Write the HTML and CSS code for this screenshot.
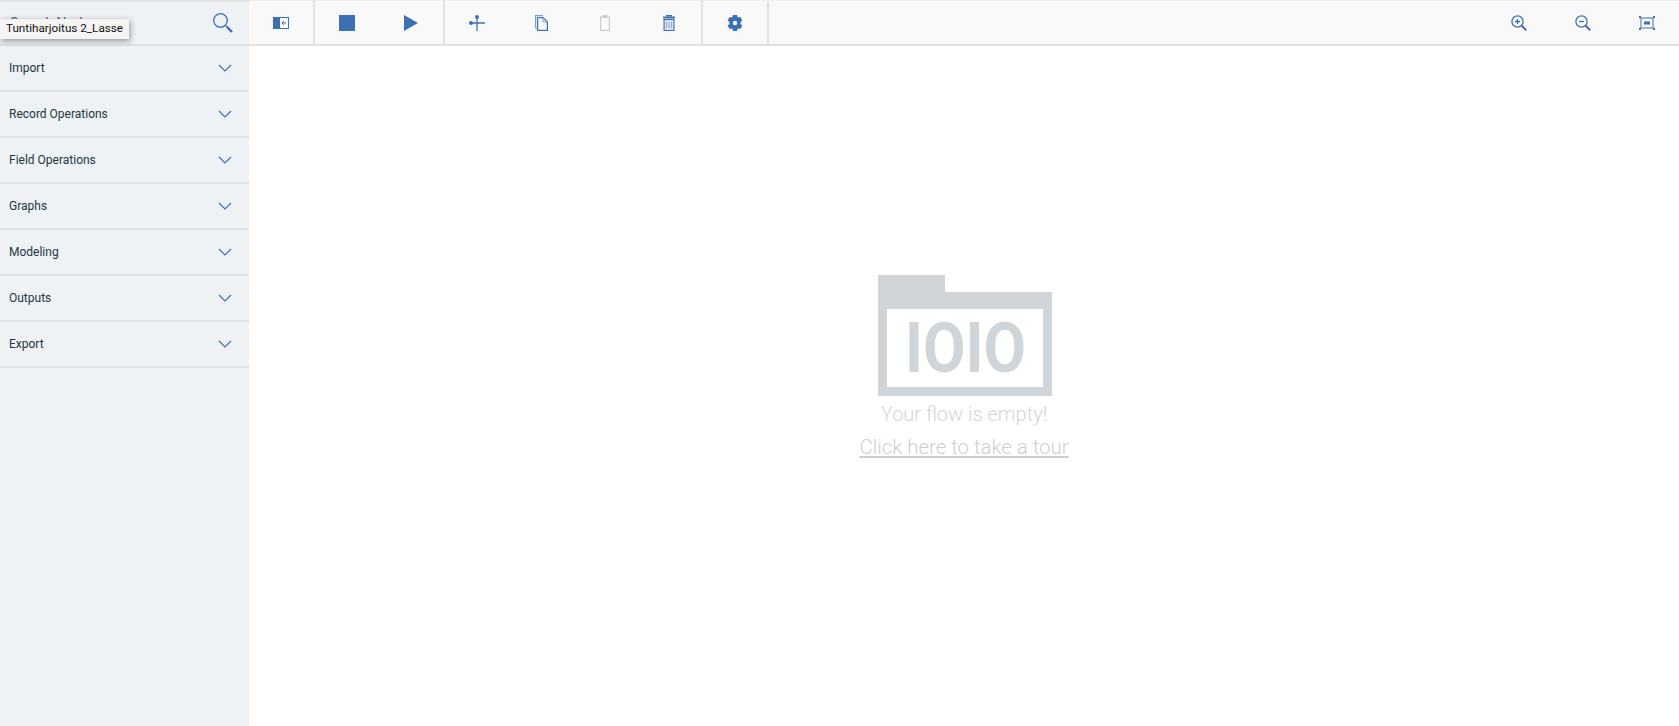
FILE: index.html
```html
<!DOCTYPE html>
<html lang="en">
  <head>
    <meta charset="UTF-8" />
    <title>Flow Editor</title>
    <link rel="stylesheet" href="styles.css">
  </head>

  <body>
    <div class="app">
      <aside class="palette">
        <div class="search-row">
          <span class="search-label">Search Nodes</span>
          <svg class="search-icon" width="20" height="20" viewBox="0 0 20 20">
            <circle cx="7.5" cy="7.5" r="6.8" fill="none" stroke="#3d70b2" stroke-width="1.3" />
            <path d="M12.5 12.5 L14.5 14.5" stroke="#3d70b2" stroke-width="1.2" />
            <path d="M14 14 L19 19" stroke="#3d70b2" stroke-width="2.4" />
          </svg>
          <div class="tooltip">Tuntiharjoitus 2_Lasse</div>
        </div>

        <div class="cat-row">
          <span>Import</span>
          <svg class="chev" width="14" height="8" viewBox="0 0 14 8"><path d="M1 1 L7 7 L13 1" /></svg>
        </div>
        <div class="cat-row">
          <span>Record Operations</span>
          <svg class="chev" width="14" height="8" viewBox="0 0 14 8"><path d="M1 1 L7 7 L13 1" /></svg>
        </div>
        <div class="cat-row">
          <span>Field Operations</span>
          <svg class="chev" width="14" height="8" viewBox="0 0 14 8"><path d="M1 1 L7 7 L13 1" /></svg>
        </div>
        <div class="cat-row">
          <span>Graphs</span>
          <svg class="chev" width="14" height="8" viewBox="0 0 14 8"><path d="M1 1 L7 7 L13 1" /></svg>
        </div>
        <div class="cat-row">
          <span>Modeling</span>
          <svg class="chev" width="14" height="8" viewBox="0 0 14 8"><path d="M1 1 L7 7 L13 1" /></svg>
        </div>
        <div class="cat-row">
          <span>Outputs</span>
          <svg class="chev" width="14" height="8" viewBox="0 0 14 8"><path d="M1 1 L7 7 L13 1" /></svg>
        </div>
        <div class="cat-row">
          <span>Export</span>
          <svg class="chev" width="14" height="8" viewBox="0 0 14 8"><path d="M1 1 L7 7 L13 1" /></svg>
        </div>
      </aside>

      <main class="main">
        <div class="toolbar">
          <div class="tool-group">
            <div class="tool">
              <svg width="16" height="12" viewBox="0 0 16 12">
                <rect x="0.5" y="0.5" width="15" height="11" fill="#fff" stroke="#3d70b2" />
                <rect x="0" y="0" width="7" height="12" fill="#3d70b2" />
                <path d="M9 6 L13 6 M11 4 L9 6 L11 8" fill="none" stroke="#3d70b2" />
              </svg>
            </div>
          </div>
          <div class="tool-group">
            <div class="tool">
              <svg width="16" height="16" viewBox="0 0 16 16"><rect width="16" height="16" fill="#3d70b2" /></svg>
            </div>
            <div class="tool">
              <svg width="14" height="16" viewBox="0 0 14 16"><path d="M0 0 L14 8 L0 16 Z" fill="#3d70b2" /></svg>
            </div>
          </div>
          <div class="tool-group">
            <div class="tool">
              <svg width="16" height="16" viewBox="0 0 16 16">
                <path d="M8 2 L8 16 M2 8 L16 8" fill="none" stroke="#3d70b2" stroke-width="1.3" />
                <circle cx="8" cy="2" r="2" fill="#3d70b2" />
                <circle cx="2" cy="8" r="2" fill="#3d70b2" />
              </svg>
            </div>
            <div class="tool">
              <svg width="13" height="16" viewBox="0 0 13 16">
                <path d="M8 0.6 L0.6 0.6 L0.6 13 L3 13" fill="none" stroke="#7d9fcf" stroke-width="1.2" />
                <path d="M2.6 2.6 L8 2.6 L12.4 7 L12.4 15.4 L2.6 15.4 Z" fill="#f9f9f9" stroke="#3d70b2" stroke-width="1.2" />
                <path d="M8 3 L8 7 L12 7" fill="none" stroke="#7d9fcf" stroke-width="1" />
              </svg>
            </div>
            <div class="tool">
              <svg width="10" height="16" viewBox="0 0 10 16">
                <rect x="0.6" y="2" width="8.8" height="13.4" fill="none" stroke="#cdcdcd" stroke-width="1.2" />
                <rect x="2.5" y="0" width="5" height="3" fill="#cdcdcd" />
              </svg>
            </div>
            <div class="tool">
              <svg width="12" height="16" viewBox="0 0 12 16">
                <rect x="3" y="0" width="6" height="1.5" fill="#3d70b2" />
                <rect x="0" y="1.5" width="12" height="2" fill="#3d70b2" />
                <rect x="1.1" y="4.6" width="9.8" height="10.8" fill="none" stroke="#3d70b2" stroke-width="1.2" />
                <path d="M3.5 6.5 V13.5 M6 6.5 V13.5 M8.5 6.5 V13.5" stroke="#8eabd4" stroke-width="1.4" />
              </svg>
            </div>
          </div>
          <div class="tool-group">
            <div class="tool">
              <svg width="16" height="16" viewBox="0 0 16 16">
                <path d="M6 0 H10 L10.8 2.4 L13.3 1.9 L15.3 5.2 L13.6 7 V9 L15.3 10.8 L13.3 14.1 L10.8 13.6 L10 16 H6 L5.2 13.6 L2.7 14.1 L0.7 10.8 L2.4 9 V7 L0.7 5.2 L2.7 1.9 L5.2 2.4 Z M8 5.8 A2.2 2.2 0 1 0 8 10.2 A2.2 2.2 0 1 0 8 5.8 Z" fill="#3d70b2" fill-rule="evenodd" />
              </svg>
            </div>
          </div>

          <div class="zoom-tools">
            <div class="tool">
              <svg width="16" height="16" viewBox="0 0 16 16">
                <circle cx="6.5" cy="6.5" r="5.6" fill="none" stroke="#3d70b2" stroke-width="1.3" />
                <path d="M4 6.5 H9 M6.5 4 V9" stroke="#3d70b2" stroke-width="1.3" />
                <path d="M10.8 10.8 L15.2 15.2" stroke="#3d70b2" stroke-width="2" />
              </svg>
            </div>
            <div class="tool">
              <svg width="16" height="16" viewBox="0 0 16 16">
                <circle cx="6.5" cy="6.5" r="5.6" fill="none" stroke="#3d70b2" stroke-width="1.3" />
                <path d="M4 6.5 H9" stroke="#3d70b2" stroke-width="1.3" />
                <path d="M10.8 10.8 L15.2 15.2" stroke="#3d70b2" stroke-width="2" />
              </svg>
            </div>
            <div class="tool">
              <svg width="16" height="14" viewBox="0 0 16 14">
                <rect x="2" y="2" width="12" height="10" fill="none" stroke="#3d70b2" stroke-width="1" />
                <rect x="5" y="5.5" width="6" height="3" fill="#3d70b2" />
                <path d="M0 0 H2 V2 H0 Z M14 0 H16 V2 H14 Z M0 12 H2 V14 H0 Z M14 12 H16 V14 H14 Z" fill="#3d70b2" />
              </svg>
            </div>
          </div>
        </div>

        <div class="canvas">
          <svg class="empty-icon" width="174" height="121" viewBox="0 0 174 121">
            <path d="M0 0 H67 V17 H174 V121 H0 Z M9 34 V112 H165 V34 Z" fill="#d0d5d9" fill-rule="evenodd" />
            <text class="empty-digits" x="27" y="97" textLength="121" lengthAdjust="spacingAndGlyphs">IOIO</text>
          </svg>
          <p class="empty-title">Your flow is empty!</p>
          <a class="empty-link" href="#">Click here to take a tour</a>
        </div>
      </main>
    </div>
  </body>
</html>
```

FILE: styles.css
```css
* {
  box-sizing: border-box;
}

html,
body {
  margin: 0;
  height: 100%;
  overflow: hidden;
}

body {
  font-family: "Roboto", "Noto Sans", sans-serif;
  color: #24363f;
  background-color: #fff;
}

.app {
  display: flex;
  height: 726px;
}

.palette {
  width: 249px;
  flex-shrink: 0;
  background-color: #eef2f5;
  border-top: 2px solid #dfe3e6;
}

.search-row {
  position: relative;
  height: 44px;
  display: flex;
  align-items: center;
  justify-content: space-between;
  padding: 0 16px 0 10px;
  border-bottom: 2px solid #dfe3e6;
}

.search-label {
  font-size: 14px;
  color: #5a6872;
}

.tooltip {
  position: absolute;
  left: 0;
  top: 17px;
  width: 129px;
  height: 20px;
  padding-left: 6px;
  font-size: 11.7px;
  line-height: 19px;
  color: #111;
  background-color: #f4f4f2;
  box-shadow: 1px 2px 6px rgba(0, 0, 0, 0.4);
}

.cat-row {
  height: 46px;
  display: flex;
  align-items: center;
  justify-content: space-between;
  padding: 0 17px 0 9px;
  font-size: 12px;
  border-bottom: 2px solid #dfe3e6;
}

.chev {
  fill: none;
  stroke: #3d70b2;
  stroke-width: 1.2;
}

.main {
  flex: 1;
  display: flex;
  flex-direction: column;
}

.toolbar {
  height: 46px;
  display: flex;
  background-color: #f9f9f9;
  border-top: 1px solid #f0f0f0;
  border-bottom: 2px solid #dfe3e6;
}

.tool-group {
  display: flex;
  border-right: 2px solid #dfe3e6;
}

.tool {
  width: 64px;
  display: flex;
  align-items: center;
  justify-content: center;
}

.zoom-tools {
  display: flex;
  margin-left: auto;
}

.canvas {
  flex: 1;
  display: flex;
  flex-direction: column;
  align-items: center;
  padding-top: 229px;
}

.empty-icon {
  margin-left: 2px;
}

.empty-digits {
  font-family: "Roboto", sans-serif;
  font-size: 70px;
  font-weight: 700;
  fill: #d0d5d9;
}

.empty-title {
  margin: 5px 0 0;
  font-size: 20px;
  font-weight: 300;
  line-height: 26px;
  color: #d3d6d9;
}

.empty-link {
  margin-top: 7px;
  font-size: 20.4px;
  font-weight: 300;
  line-height: 26px;
  color: #ccd0d3;
}
```
